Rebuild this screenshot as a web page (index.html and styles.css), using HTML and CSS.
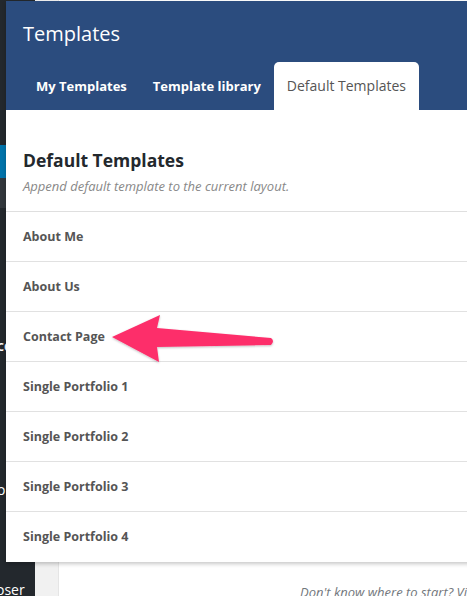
FILE: index.html
```html
<!DOCTYPE html>
<html>
<head>
<meta charset="utf-8">
<link rel="stylesheet" href="styles.css">
</head>
<body>
<div class="admin">
  <aside class="sidebar">
    <div class="menu-top"></div>
    <div class="menu-current"></div>
    <div class="menu-sub"></div>
    <div class="menu-rest">
      <span class="side-co">co</span>
      <span class="side-o">o</span>
      <span class="side-oser">oser</span>
    </div>
  </aside>
  <div class="gutter"></div>
  <main class="page">
    <p class="hint">Don't know where to start? Visit</p>
  </main>
</div>

<div class="modal">
  <header class="modal-head">
    <h1 class="modal-title">Templates</h1>
    <nav class="tabs">
      <span class="tab">My Templates</span>
      <span class="tab">Template library</span>
      <span class="tab active">Default Templates</span>
    </nav>
  </header>
  <section class="modal-body">
    <div class="intro">
      <h2 class="intro-title">Default Templates</h2>
      <p class="intro-sub">Append default template to the current layout.</p>
    </div>
    <ul class="list">
      <li>About Me</li>
      <li>About Us</li>
      <li>Contact Page</li>
      <li>Single Portfolio 1</li>
      <li>Single Portfolio 2</li>
      <li>Single Portfolio 3</li>
      <li>Single Portfolio 4</li>
    </ul>
  </section>
</div>

<svg class="arrow" width="180" height="60" viewBox="100 310 180 60">
  <defs>
    <filter id="sh" x="-10%" y="-20%" width="120%" height="150%">
      <feDropShadow dx="0" dy="1" stdDeviation="1" flood-color="#000" flood-opacity="0.25"/>
    </filter>
  </defs>
  <path d="M112,337 L160,315 L157,328 L271,338 Q275,341 271,345 L157,347 L159,362 Z" fill="#fd2e6b" filter="url(#sh)"/>
</svg>
</body>
</html>
```
FILE: styles.css
```css
* { box-sizing: border-box; }
html, body { margin: 0; padding: 0; }
body {
  width: 467px;
  height: 596px;
  overflow: hidden;
  position: relative;
  font-family: "Open Sans", "Noto Sans", sans-serif;
  background: #f1f1f1;
}

.admin {
  display: flex;
  height: 596px;
}
.sidebar {
  width: 35px;
  background: #23282d;
  display: flex;
  flex-direction: column;
}
.menu-top { height: 145px; }
.menu-current { height: 33px; background: #0073aa; }
.menu-sub { height: 30px; background: #32373c; }
.menu-rest {
  flex: 1;
  position: relative;
  color: #fff;
  font-size: 14px;
}
.side-co { position: absolute; left: -3px; top: 128px; font-weight: 600; }
.side-o { position: absolute; left: -3px; top: 272px; }
.side-oser { position: absolute; left: -4px; top: 372px; }

.gutter { width: 23px; background: #f1f1f1; }
.page {
  flex: 1;
  background: #fff;
  border-left: 1px solid #e5e5e5;
  display: flex;
  flex-direction: column;
  justify-content: flex-end;
  align-items: flex-start;
  padding-left: 241px;
  overflow: hidden;
}
.hint {
  margin: 0;
  font-style: italic;
  font-size: 13px;
  color: #72777c;
  line-height: 14px;
  transform: translateY(3px);
  white-space: nowrap;
}

.modal {
  position: absolute;
  left: 6px;
  top: 1px;
  width: 470px;
  background: #fff;
  box-shadow: 0 2px 4px rgba(0,0,0,0.22);
}
.modal-head {
  background: #2b4c7e;
  height: 109px;
  padding: 0 0 0 17px;
  display: flex;
  flex-direction: column;
  justify-content: space-between;
}
.modal-title {
  margin: 19px 0 0 0;
  font-size: 20px;
  font-weight: 400;
  color: #fff;
  line-height: 28px;
}
.tabs {
  display: flex;
  align-items: flex-end;
}
.tab {
  display: block;
  height: 48px;
  line-height: 48px;
  padding: 0 13px;
  font-size: 13px;
  font-weight: 700;
  color: #fff;
  white-space: nowrap;
}
.tab.active {
  background: #fff;
  color: #555;
  font-size: 14px;
  font-weight: 400;
  border-radius: 5px 5px 0 0;
}

.intro {
  padding: 38px 17px 16px;
  border-bottom: 1px solid #dfdfdf;
}
.intro-title {
  margin: 0;
  font-size: 17.5px;
  font-weight: 700;
  color: #23282d;
  line-height: 24px;
}
.intro-sub {
  margin: 5px 0 0;
  font-size: 13px;
  font-style: italic;
  color: #888;
  line-height: 18px;
}
.list {
  list-style: none;
  margin: 0;
  padding: 0;
}
.list li {
  height: 50px;
  line-height: 50px;
  padding: 0 17px;
  font-size: 12.5px;
  font-weight: 700;
  color: #555;
  border-bottom: 1px solid #e1e1e1;
}
.list li:last-child { border-bottom: none; }

.arrow {
  position: absolute;
  left: 100px;
  top: 310px;
}
```
